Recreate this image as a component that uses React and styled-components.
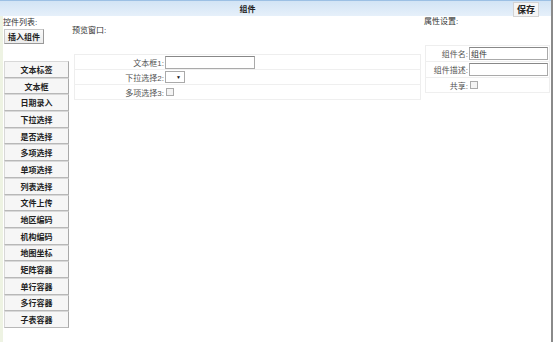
import React from 'react'
import styled, { createGlobalStyle } from 'styled-components'

const Global = createGlobalStyle`
  html, body { margin:0; padding:0; background:#fff; }
  body {
    font-family: "Liberation Sans", "Noto Sans CJK SC", sans-serif;
    font-size:8px;
    color:#333;
  }
`

const tools = ['文本标签','文本框','日期录入','下拉选择','是否选择','多项选择','单项选择','列表选择','文件上传','地区编码','机构编码','地图坐标','矩阵容器','单行容器','多行容器','子表容器']

export default function App() {
  return (
    <Page>
      <Global />
      <Header>
        <Title>组件</Title>
        <SaveButton>保存</SaveButton>
      </Header>
      <Body>
        <Sidebar>
          <Caption>控件列表:</Caption>
          <InsertButton>插入组件</InsertButton>
          <ToolList>
            {tools.map(t => <ToolButton key={t}>{t}</ToolButton>)}
          </ToolList>
        </Sidebar>
        <Preview>
          <Caption $top={10}>预览窗口:</Caption>
          <FormTable $width={347} $label={89} $mt={18} $ml={2}>
            <tbody>
              <Row>
                <Label>文本框1:</Label>
                <Cell><TextInput $w={90} /></Cell>
              </Row>
              <Row>
                <Label>下拉选择2:</Label>
                <Cell><Select><Arrow>▼</Arrow></Select></Cell>
              </Row>
              <Row>
                <Label>多项选择3:</Label>
                <Cell><Check /></Cell>
              </Row>
            </tbody>
          </FormTable>
        </Preview>
        <Props>
          <Caption>属性设置:</Caption>
          <FormTable $width={125} $label={42} $mt={18} $ml={1} $row={16}>
            <tbody>
              <Row $h={16}>
                <Label>组件名:</Label>
                <Cell><TextInput $w={79} defaultValue="组件" /></Cell>
              </Row>
              <Row $h={16}>
                <Label>组件描述:</Label>
                <Cell><TextInput $w={79} /></Cell>
              </Row>
              <Row $h={15}>
                <Label>共享:</Label>
                <Cell><Check /></Cell>
              </Row>
            </tbody>
          </FormTable>
        </Props>
      </Body>
    </Page>
  )
}

const Page = styled.div`
  width:553px;
  height:342px;
  position:relative;
  overflow:hidden;
  border-right:2px solid #8a8a8a;
  box-sizing:border-box;
`

const Header = styled.div`
  height:15px;
  border-top:1px solid #9cc0e4;
  background:linear-gradient(#d2e4f5, #e6f0fa);
  display:flex;
  align-items:center;
  justify-content:center;
  position:relative;
`

const Title = styled.div`
  font-weight:bold;
  font-size:8px;
  color:#222;
  margin-left:-56px;
`

const SaveButton = styled.div`
  position:absolute;
  right:12px;
  top:1px;
  width:26px;
  height:15px;
  background:#f5f5f5;
  border:1px solid #d4d4d4;
  box-sizing:border-box;
  display:flex;
  align-items:center;
  justify-content:center;
  font-weight:bold;
  font-size:9px;
  color:#222;
`

const Body = styled.div`
  display:flex;
  height:326px;
  border-left:3px solid #eef3e3;
`

const Sidebar = styled.div`
  width:66px;
  display:flex;
  flex-direction:column;
  align-items:flex-start;
  padding-top:1px;
`

const Caption = styled.div`
  font-size:8px;
  color:#333;
  line-height:10px;
  margin-top:${p => p.$top || 1}px;
`

const InsertButton = styled.div`
  margin:1px 0 0 1px;
  width:40px;
  height:15px;
  box-sizing:border-box;
  background:linear-gradient(#fafafa, #ececec);
  border:1px solid #c8c8c8;
  border-right-color:#999;
  border-bottom-color:#999;
  display:flex;
  align-items:center;
  justify-content:center;
  font-weight:bold;
  font-size:8px;
  color:#222;
`

const ToolList = styled.div`
  margin-top:17px;
  margin-left:1px;
  display:flex;
  flex-direction:column;
  width:65px;
`

const ToolButton = styled.div`
  height:16.7px;
  box-sizing:border-box;
  background:#f6f6f6;
  border:1px solid #d8d8d8;
  border-right-color:#a9a9a9;
  border-bottom-color:#b8b8b8;
  display:flex;
  align-items:center;
  justify-content:center;
  font-weight:bold;
  font-size:8px;
  color:#222;
`

const Preview = styled.div`
  width:355px;
  padding-left:3px;
  display:flex;
  flex-direction:column;
`

const Props = styled.div`
  width:128px;
  display:flex;
  flex-direction:column;
`

const FormTable = styled.table`
  margin-top:${p => p.$mt}px;
  margin-left:${p => p.$ml}px;
  width:${p => p.$width}px;
  table-layout:fixed;
  border-collapse:collapse;
  border:1px solid #eeeeee;
  td:first-child { width:${p => p.$label}px; }
`

const Row = styled.tr`
  height:${p => p.$h || 15}px;
  border-bottom:1px solid #efefef;
`

const Label = styled.td`
  text-align:right;
  padding:0 1px 0 0;
  white-space:nowrap;
  color:#555;
  font-size:8px;
`

const Cell = styled.td`
  padding:0;
`

const TextInput = styled.input`
  display:block;
  width:${p => p.$w}px;
  height:13px;
  box-sizing:border-box;
  border:1px solid #aaa;
  border-top-color:#888;
  font-family:inherit;
  font-size:8px;
  padding:0 1px;
  color:#333;
`

const Select = styled.div`
  width:20px;
  height:12px;
  box-sizing:border-box;
  border:1px solid #aaa;
  display:flex;
  align-items:center;
  justify-content:flex-end;
  padding-right:3px;
`

const Arrow = styled.span`
  font-size:5px;
  color:#111;
`

const Check = styled.span`
  display:inline-block;
  width:6px;
  height:6px;
  border:1px solid #aaa;
  background:#f4f4f4;
  margin-left:1px;
  vertical-align:middle;
`
